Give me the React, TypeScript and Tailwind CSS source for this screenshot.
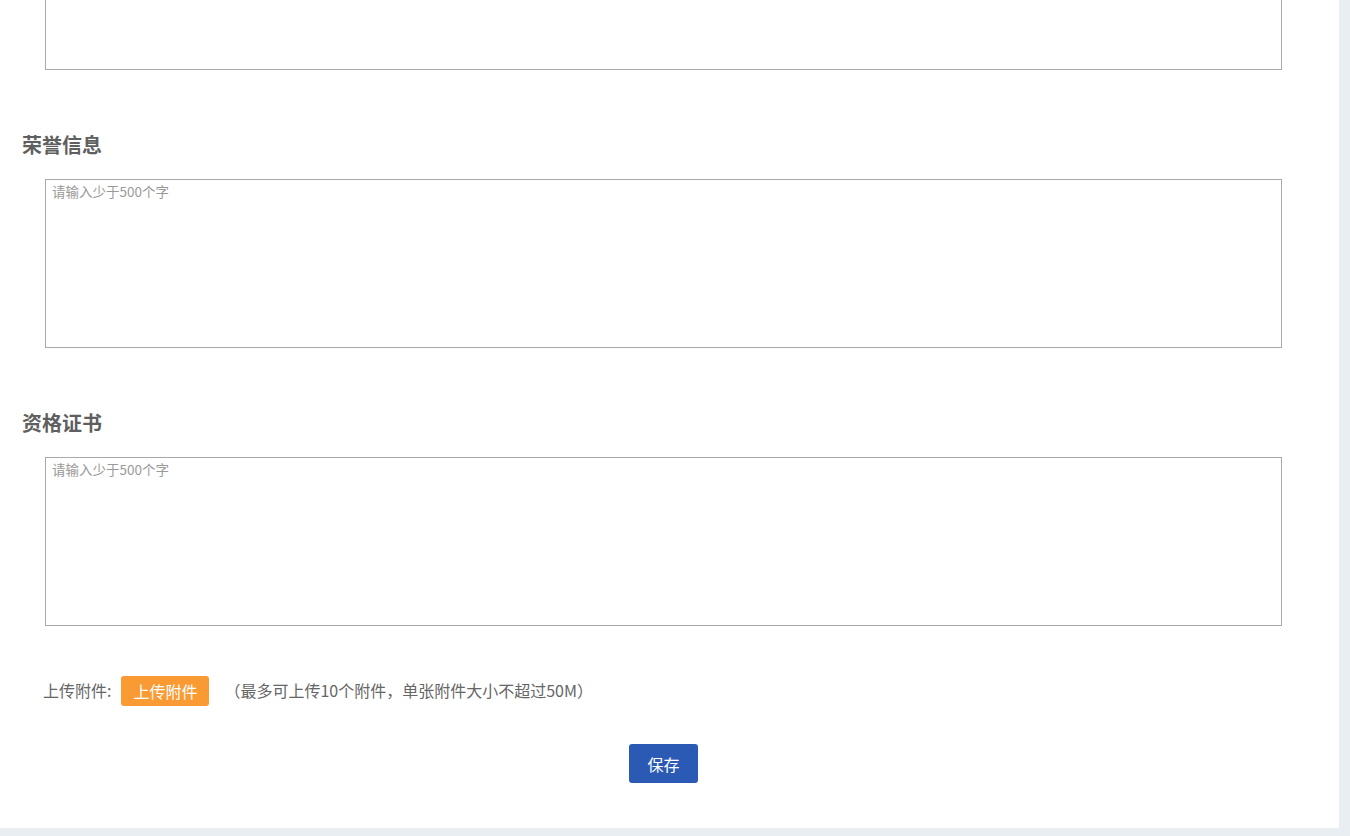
export default function App() {
  const font = { fontFamily: '"Microsoft YaHei", "Noto Sans CJK SC", "Noto Sans", sans-serif' };

  return (
    <div className="h-[836px] w-[1350px] overflow-hidden bg-[#e9eef2]" style={font}>
      <div className="h-[828px] w-[1339px] overflow-hidden bg-white">
        {/* cut-off field from above */}
        <div className="pl-[45px]">
          <textarea
            className="-mt-[99px] block h-[169px] w-[1237px] resize-none border border-[#a9a9a9] px-[6px] py-[4px] text-[13px] outline-none"
          />
        </div>

        <h3 className="mt-[61px] pl-[22px] text-[20px] leading-[28px] font-bold text-[#5f5f5f]">荣誉信息</h3>
        <div className="mt-[20px] pl-[45px]">
          <textarea
            placeholder="请输入少于500个字"
            className="block h-[169px] w-[1237px] resize-none border border-[#a9a9a9] px-[6px] py-[2px] text-[13.5px] leading-[18px] text-[#333] placeholder-[#999] outline-none"
          />
        </div>

        <h3 className="mt-[61px] pl-[22px] text-[20px] leading-[28px] font-bold text-[#5f5f5f]">资格证书</h3>
        <div className="mt-[20px] pl-[45px]">
          <textarea
            placeholder="请输入少于500个字"
            className="block h-[169px] w-[1237px] resize-none border border-[#a9a9a9] px-[6px] py-[2px] text-[13.5px] leading-[18px] text-[#333] placeholder-[#999] outline-none"
          />
        </div>

        {/* attachments */}
        <div className="mt-[50px] flex h-[30px] items-center pl-[43px] text-[16px] text-[#666]">
          <span className="-mt-[3px]">上传附件:</span>
          <button className="ml-[10px] h-[30px] w-[88px] rounded-[3px] bg-[#f99a33] text-[16px] text-white">
            上传附件
          </button>
          <span className="-mt-[3px] ml-[15px]">（最多可上传10个附件，单张附件大小不超过50M）</span>
        </div>

        <div className="mt-[38px] flex justify-center pr-[12px]">
          <button className="h-[39px] w-[69px] rounded-[3px] bg-[#2b5ab5] text-[16px] text-white">保存</button>
        </div>
      </div>
    </div>
  );
}
